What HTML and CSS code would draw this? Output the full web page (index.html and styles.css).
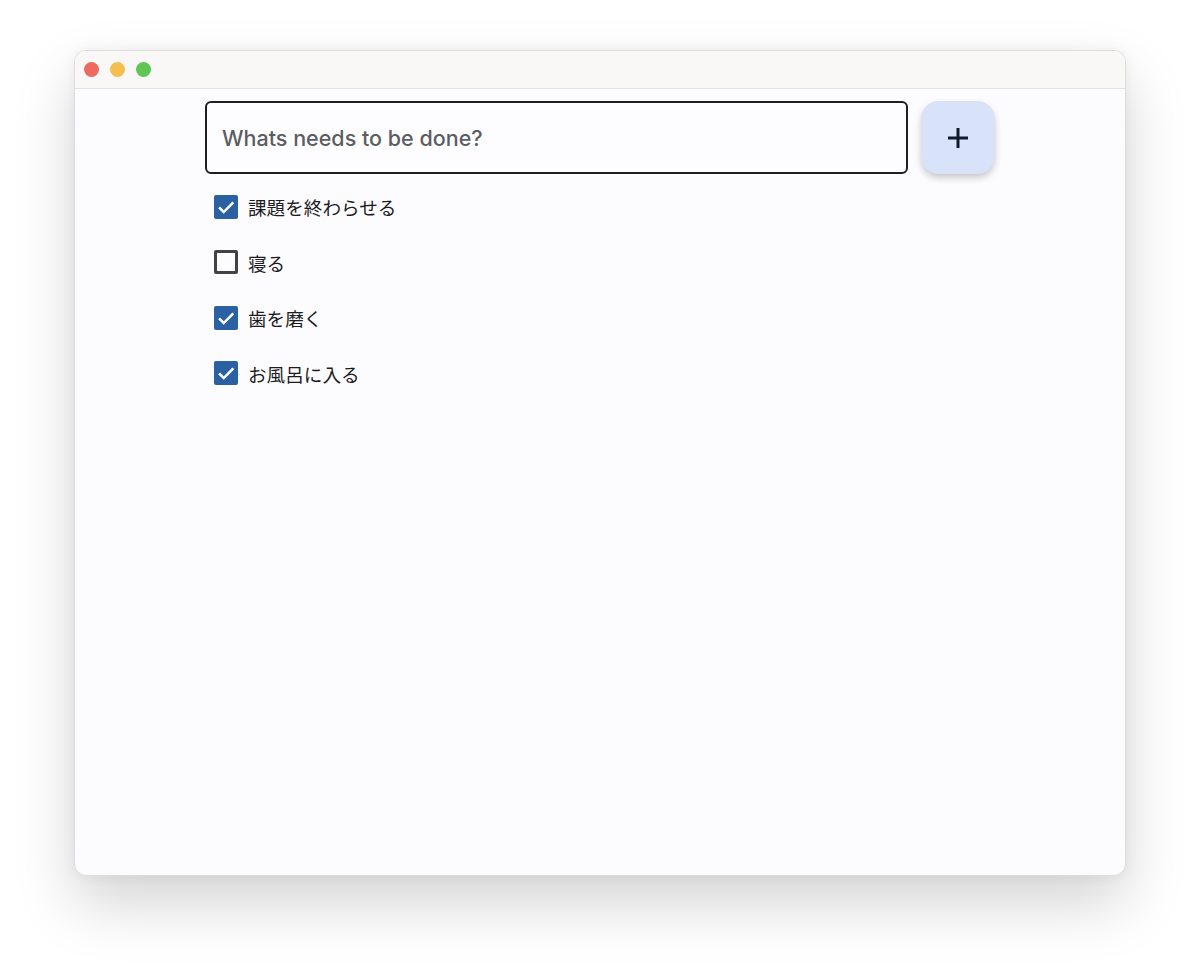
FILE: index.html
```html
<!DOCTYPE html>
<html lang="ja">
  <head>
    <meta charset="UTF-8" />
    <title>Todo</title>
    <link rel="stylesheet" href="styles.css">
  </head>
  <body>
    <div class="window">
      <div class="titlebar">
        <span class="light red"></span>
        <span class="light yellow"></span>
        <span class="light green"></span>
      </div>
      <div class="content">
        <div class="form">
          <div class="field">
            <input type="text" placeholder="Whats needs to be done?" />
          </div>
          <button class="add-btn" aria-label="追加">
            <svg width="24" height="24" viewBox="0 0 24 24">
              <path d="M12 2v20M2 12h20" stroke="#111a2c" stroke-width="3" fill="none" />
            </svg>
          </button>
        </div>

        <ul class="todos">
          <li class="todo">
            <span class="box checked">
              <svg viewBox="0 0 24 24"><path d="M4.5 12.5l5 5L20 7" /></svg>
            </span>
            <span class="label">課題を終わらせる</span>
          </li>
          <li class="todo">
            <span class="box"></span>
            <span class="label">寝る</span>
          </li>
          <li class="todo">
            <span class="box checked">
              <svg viewBox="0 0 24 24"><path d="M4.5 12.5l5 5L20 7" /></svg>
            </span>
            <span class="label">歯を磨く</span>
          </li>
          <li class="todo">
            <span class="box checked">
              <svg viewBox="0 0 24 24"><path d="M4.5 12.5l5 5L20 7" /></svg>
            </span>
            <span class="label">お風呂に入る</span>
          </li>
        </ul>
      </div>
    </div>
  </body>
</html>
```

FILE: styles.css
```css
body {
  margin: 0;
  padding: 50px 0 98px;
  background: #ffffff;
  font-family: Roboto, "Noto Sans CJK JP", sans-serif;
}

.window {
  margin: 0 74px;
  height: 826px;
  background: #fcfcfe;
  border: 1px solid #dcdcdc;
  border-radius: 12px;
  box-sizing: border-box;
  overflow: hidden;
  box-shadow: 0 28px 60px rgba(0, 0, 0, 0.17), 0 0 14px rgba(0, 0, 0, 0.05);
}

.titlebar {
  height: 37px;
  background: #f9f8f7;
  border-bottom: 1px solid #e2e2e2;
  display: flex;
  align-items: center;
  gap: 11px;
  padding-left: 9px;
}

.light {
  width: 15px;
  height: 15px;
  border-radius: 50%;
}

.red {
  background: #ec6a5e;
}

.yellow {
  background: #f4bf4f;
}

.green {
  background: #61c554;
}

.content {
  width: 790px;
  margin: 0 auto;
  padding-top: 12px;
}

.form {
  display: flex;
  gap: 13px;
}

.field {
  flex: 1;
}

.field input {
  width: 100%;
  height: 73px;
  box-sizing: border-box;
  border: 2px solid #1f1f22;
  border-radius: 6px;
  background: #fdfdff;
  padding: 0 15px;
  font-family: Inter, Roboto, sans-serif;
  font-size: 21.5px;
  outline: none;
}

.field input::placeholder {
  color: #5c5d62;
  font-weight: 500;
}

.add-btn {
  width: 74px;
  height: 73px;
  border: none;
  border-radius: 18px;
  background: #d8e3fa;
  display: flex;
  align-items: center;
  justify-content: center;
  box-shadow: 0 4px 7px rgba(0, 0, 0, 0.2);
  cursor: pointer;
}

.todos {
  list-style: none;
  margin: 5px 0 0;
  padding: 0 0 0 9px;
}

.todo {
  display: flex;
  align-items: center;
  gap: 10px;
  height: 55.5px;
  font-size: 18.6px;
  color: #1d1d1f;
}

.box {
  width: 24px;
  height: 24px;
  box-sizing: border-box;
  border: 3px solid #424245;
  border-radius: 2px;
  display: flex;
  align-items: center;
  justify-content: center;
}

.box.checked {
  background: #2b60a3;
  border: none;
}

.box svg {
  width: 22px;
  height: 22px;
}

.box svg path {
  stroke: #ffffff;
  stroke-width: 2.8;
  fill: none;
}
```
